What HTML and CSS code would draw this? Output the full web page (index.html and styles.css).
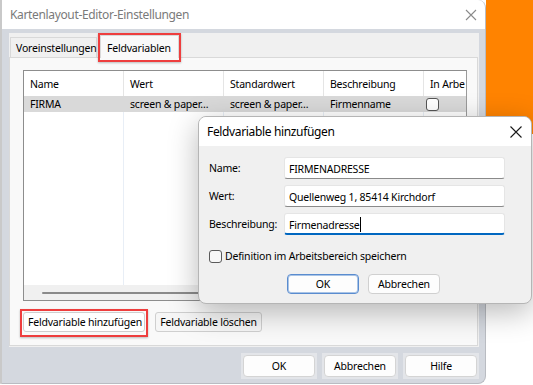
FILE: index.html
```html
<!DOCTYPE html>
<html lang="de">
<head>
<meta charset="utf-8">
<title>Kartenlayout-Editor-Einstellungen</title>
<link rel="stylesheet" href="styles.css">
</head>
<body>
<div class="window">
  <div class="titlebar">
    <span class="title">Kartenlayout-Editor-Einstellungen</span>
    <svg class="close" width="12" height="12" viewBox="0 0 12 12"><path d="M1 1L11 11M11 1L1 11" stroke="#8a8a8a" stroke-width="1.1" fill="none"/></svg>
  </div>
  <div class="client">
    <div class="tabctl">
      <div class="tabs">
        <span class="tab first">Voreinstellungen</span>
        <span class="tab active mark">Feldvariablen</span>
      </div>
      <div class="page">
        <div class="list">
          <div class="cols">
            <div class="col c1"><div class="th">Name</div><div class="td sel">FIRMA</div></div>
            <div class="col c2"><div class="th">Wert</div><div class="td sel">screen &amp; paper…</div></div>
            <div class="col c3"><div class="th">Standardwert</div><div class="td sel">screen &amp; paper…</div></div>
            <div class="col c4"><div class="th">Beschreibung</div><div class="td sel">Firmenname</div></div>
            <div class="col c5"><div class="th">In Arbe</div><div class="td sel"><span class="cb"></span></div></div>
          </div>
          <div class="hscroll"><span class="thumb"></span></div>
        </div>
        <div class="pagebtns">
          <span class="mark2"><button class="btn add">Feldvariable hinzufügen</button></span>
          <button class="btn del">Feldvariable löschen</button>
        </div>
      </div>
    </div>
    <div class="footer">
      <span class="bframe"><button class="btn big">OK</button></span>
      <span class="bframe"><button class="btn big">Abbrechen</button></span>
      <span class="bframe"><button class="btn big">Hilfe</button></span>
    </div>
  </div>
</div>

<div class="dialog">
  <div class="dtitle">
    <span>Feldvariable hinzufügen</span>
    <svg width="12" height="12" viewBox="0 0 12 12"><path d="M0.5 0.5L11.5 11.5M11.5 0.5L0.5 11.5" stroke="#1a1a1a" stroke-width="1.1" fill="none"/></svg>
  </div>
  <div class="dbody">
    <div class="frow"><label>Name:</label><div class="inp">FIRMENADRESSE</div></div>
    <div class="frow"><label>Wert:</label><div class="inp">Quellenweg 1, 85414 Kirchdorf</div></div>
    <div class="frow"><label>Beschreibung:</label><div class="inp focus">Firmenadresse<span class="caret"></span></div></div>
    <div class="chk"><span class="cb2"></span><span>Definition im Arbeitsbereich speichern</span></div>
    <div class="dbtns">
      <button class="dbtn def">OK</button>
      <button class="dbtn">Abbrechen</button>
    </div>
  </div>
</div>
</body>
</html>
```
FILE: styles.css
```css
* { box-sizing: border-box; }
html, body { margin: 0; padding: 0; }
body {
  width: 533px;
  height: 385px;
  overflow: hidden;
  position: relative;
  font-family: "Noto Sans", "Open Sans", sans-serif;
  font-size: 10.5px;
  letter-spacing: -0.2px;
  line-height: 16px;
  color: #000;
  background: linear-gradient(#ff8300, #ff8300) no-repeat right top / 47px 134px, #ffffff;
}
button { font: inherit; color: inherit; margin: 0; letter-spacing: inherit; white-space: nowrap; }

.window {
  width: 486px;
  height: 384px;
  border: 1px solid #b9bcc2;
  border-left: 2px solid #c9c9c9;
  border-top: none;
  border-radius: 0 8px 8px 0;
  background: #d4d8df;
  display: flex;
  flex-direction: column;
  overflow: hidden;
}
.titlebar {
  height: 29px;
  flex: none;
  background: #fff;
  display: flex;
  align-items: center;
  justify-content: space-between;
  padding: 0 8px 0 8px;
  color: #7a7a7a;
  font-size: 12px;
  letter-spacing: -0.35px;
}
.client {
  flex: 1;
  display: flex;
  flex-direction: column;
  padding: 4px 6px 0 7px;
}
.tabctl {
  height: 314px;
  background: #f0f0f0;
  display: flex;
  flex-direction: column;
  padding: 0 1px 1px 0;
}
.tabs {
  height: 24px;
  display: flex;
  align-items: flex-end;
  padding-left: 1px;
  gap: 3px;
}
.tab {
  height: 20px;
  padding: 2px 0 0 5px;
  background: #f0f0f0;
  border: 1px solid #d9d9d9;
  border-bottom: none;
  white-space: nowrap;
}
.tab.first { width: 87px; }
.tab.active {
  width: 79px;
  height: 23px;
  padding: 4px 0 0 6px;
  background: #f9f9f9;
  margin-bottom: -1px;
  position: relative;
  z-index: 1;
}
.mark::after {
  content: "";
  position: absolute;
  left: -3px; top: -3px; right: -3px; bottom: -4px;
  border: 2px solid #ee3e3e;
  box-shadow: 0 1px 2px rgba(0,0,0,0.25);
}
.page {
  flex: 1;
  background: #f9f9f9;
  border: 1px solid #d9d9d9;
  padding: 12px 10px 0 13px;
  display: flex;
  flex-direction: column;
}
.list {
  height: 231px;
  width: 444px;
  border: 1px solid #8d8d8d;
  border-right-color: #9a9a9a;
  background: #fff;
  display: flex;
  flex-direction: column;
}
.cols { flex: 1; display: flex; }
.col { display: flex; flex-direction: column; border-right: 1px solid #e8eef6; }
.c1, .c2, .c3, .c4 { width: 100px; }
.c5 { flex: 1; border-right: none; }
.th {
  height: 25px;
  padding: 5px 0 0 6px;
  border-right: 1px solid #e5e5e5;
  margin-right: -1px;
  background: #fff;
  white-space: nowrap;
  overflow: hidden;
}
.c5 .th { border-right: none; margin-right: 0; }
.td {
  height: 16px;
  padding: 0 0 0 6px;
  background: #d9d9d9;
  white-space: nowrap;
  overflow: hidden;
  margin-right: -1px;
}
.c5 .td { margin-right: 0; padding-left: 2px; display: flex; align-items: center; }
.cb {
  width: 13px; height: 13px;
  border: 1px solid #555;
  border-radius: 3px;
  background: #fff;
}
.hscroll {
  height: 15px;
  background: #f0f0f0;
  display: flex;
  align-items: center;
  padding-left: 18px;
}
.thumb { width: 380px; height: 2px; background: #8a8a8a; border-radius: 1px; }

.pagebtns {
  display: flex;
  gap: 10px;
  margin-top: 11px;
}
.mark2 { position: relative; display: flex; }
.mark2::after {
  content: "";
  position: absolute;
  left: -3px; top: -3px; right: -3px; bottom: -5px;
  border: 2px solid #ee3e3e;
  box-shadow: 0 1px 2px rgba(0,0,0,0.25);
}
.btn {
  height: 20px;
  padding: 0 4px;
  background: #f6f6f6;
  border: 1px solid #cfcfcf;
  border-radius: 3px;
  line-height: 16px;
}
.btn.add { background: #fff; width: 122px; }
.btn.del { width: 107px; }

.footer {
  display: flex;
  justify-content: flex-end;
  gap: 5px;
  padding: 6px 0 0 0;
}
.bframe {
  padding: 2px;
  background: #e3e5e9;
  display: flex;
}
.btn.big {
  width: 72px;
  height: 22px;
  background: #fdfdfd;
  border-color: #d4d4d4;
  border-radius: 4px;
}

.dialog {
  position: absolute;
  left: 198px;
  top: 116px;
  width: 334px;
  height: 188px;
  border: 1px solid #b5b5b5;
  border-radius: 8px;
  background: #f0f0f0;
  box-shadow: 0 8px 30px rgba(0,0,0,0.28);
  overflow: hidden;
  display: flex;
  flex-direction: column;
}
.dtitle {
  height: 29px;
  background: #fff;
  display: flex;
  align-items: center;
  justify-content: space-between;
  padding: 0 9px 0 8px;
  font-size: 12px;
  letter-spacing: -0.35px;
}
.dbody {
  flex: 1;
  padding: 11px 26px 0 10px;
  display: flex;
  flex-direction: column;
}
.frow {
  display: flex;
  align-items: center;
  height: 22px;
  margin-bottom: 6px;
}
.frow label { width: 75px; white-space: nowrap; }
.inp {
  width: 221px;
  height: 22px;
  background: #fff;
  border: 1px solid #e5e5e5;
  border-bottom-color: #8a8a8a;
  border-radius: 3px;
  padding: 2px 4px 0 4px;
  display: flex;
  align-items: center;
  white-space: nowrap;
}
.inp.focus { border-bottom: 2px solid #0067c0; }
.caret { width: 1px; height: 15px; background: #000; }
.chk {
  display: flex;
  align-items: center;
  gap: 3px;
  margin-top: 7px;
}
.cb2 {
  width: 13px; height: 13px;
  border: 1px solid #5a5a5a;
  border-radius: 3px;
  background: #f7f7f7;
}
.dbtns {
  display: flex;
  gap: 9px;
  margin-top: 10px;
  padding-left: 78px;
}
.dbtn {
  width: 72px;
  height: 20px;
  background: #fdfdfd;
  border: 1px solid #d0d0d0;
  border-radius: 4px;
  line-height: 16px;
  padding: 0;
}
.dbtn.def { border: 1px solid #5a8ccf; box-shadow: inset 0 0 0 1px #a9c4e6; }
```
